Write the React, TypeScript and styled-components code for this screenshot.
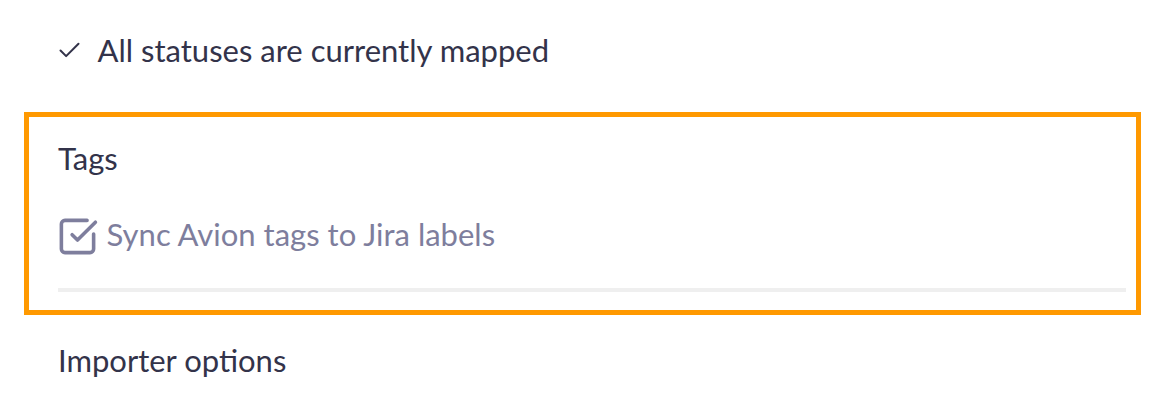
import React from "react";
import styled, { createGlobalStyle } from "styled-components";
import { Check, SquareCheckBig } from "lucide-react";

const GlobalStyle = createGlobalStyle`
  html, body {
    margin: 0;
    padding: 0;
    background: #ffffff;
  }
  body {
    font-family: Lato, "Open Sans", sans-serif;
    -webkit-font-smoothing: antialiased;
  }
`;

const Page = styled.div`
  width: 1162px;
  height: 414px;
  padding: 30px 0 0 24px;
  box-sizing: border-box;
  display: flex;
  flex-direction: column;
`;

const StatusRow = styled.div`
  display: flex;
  align-items: center;
  gap: 15px;
  padding-left: 31.5px;
  height: 40px;
  line-height: 40px;
  color: #33334a;
  font-size: 31px;

  svg {
    flex: none;
    margin-top: 1px;
  }
`;

const Section = styled.section`
  margin-top: 42px;
  width: 1117px;
  height: 203px;
  flex: none;
  box-sizing: border-box;
  border: 5px solid #ff9900;
  padding: 21px 10px 0 29px;
  display: flex;
  flex-direction: column;
`;

const SectionTitle = styled.h3`
  margin: 0;
  font-size: 31px;
  font-weight: 400;
  line-height: 40px;
  color: #33334a;
`;

const CheckOption = styled.label`
  display: flex;
  align-items: flex-start;
  gap: 8px;
  margin: 35.5px 0 0 -2.4px;
  font-size: 31px;
  line-height: 40px;
  color: #7e7e9d;

  svg {
    flex: none;
    margin-top: 1px;
  }
`;

const Divider = styled.hr`
  margin: 30.5px 0 0;
  border: none;
  height: 4px;
  background: #efefef;
`;

const NextHeading = styled.h3`
  margin: 25px 0 0 34px;
  font-size: 31px;
  font-weight: 400;
  line-height: 40px;
  color: #33334a;
`;

export default function App() {
  return (
    <>
      <GlobalStyle />
      <Page>
        <StatusRow>
          <Check size={27} strokeWidth={1.8} />
          <span>All statuses are currently mapped</span>
        </StatusRow>
        <Section>
          <SectionTitle>Tags</SectionTitle>
          <CheckOption>
            <SquareCheckBig size={43} strokeWidth={2} />
            <span>Sync Avion tags to Jira labels</span>
          </CheckOption>
          <Divider />
        </Section>
        <NextHeading>Importer options</NextHeading>
      </Page>
    </>
  );
}
